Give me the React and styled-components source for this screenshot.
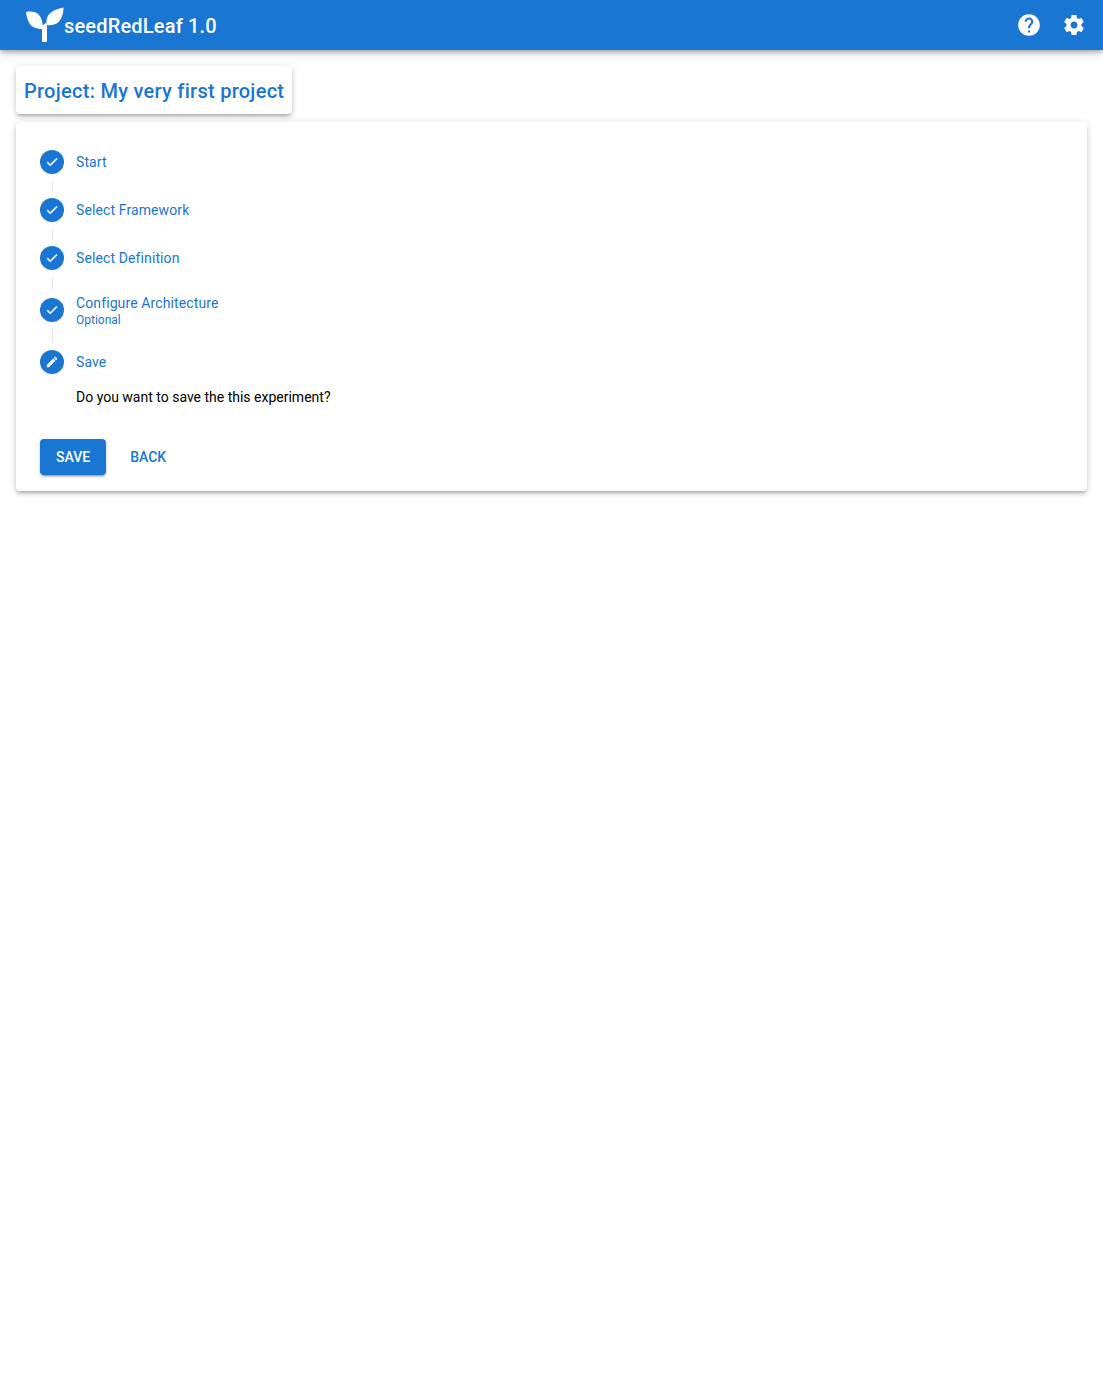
import styled, { createGlobalStyle } from "styled-components"

const GlobalStyle = createGlobalStyle`
  html, body {
    margin: 0;
    padding: 0;
    background: #fff;
    font-family: Roboto, "Helvetica Neue", Arial, sans-serif;
    font-size: 14px;
  }
`

const BLUE = "#1976d2"
const RAISED = "0 3px 3px -2px rgba(0,0,0,.2), 0 3px 4px 0 rgba(0,0,0,.14), 0 1px 8px 0 rgba(0,0,0,.12)"

const Page = styled.div`
  min-height: 1389px;
`
const Bar = styled.header`
  height: 50px;
  background: ${BLUE};
  color: #fff;
  display: flex;
  align-items: center;
  padding: 0 16px 0 24px;
  box-shadow: 0 2px 4px -1px rgba(0,0,0,.2), 0 4px 5px 0 rgba(0,0,0,.14), 0 1px 10px 0 rgba(0,0,0,.12);
`
const Logo = styled.svg`
  width: 40px;
  height: 36px;
  flex: none;
  margin-top: -2px;
`
const Brand = styled.div`
  font-size: 20px;
  font-weight: 500;
  letter-spacing: .18px;
  line-height: 32px;
  margin-top: 1px;
`
const Spacer = styled.div`
  flex: 1;
`
const IconButton = styled.button`
  width: 26px;
  height: 26px;
  padding: 0;
  margin-left: ${props => props.$gap || 0}px;
  border: 0;
  background: none;
  color: #fff;
  display: flex;
  align-items: center;
  justify-content: center;
`
const Glyph = styled.svg`
  width: ${props => props.$size || 24}px;
  height: ${props => props.$size || 24}px;
  fill: currentColor;
  stroke: currentColor;
  stroke-width: ${props => props.$stroke || 0};
  display: block;
`
const Main = styled.main`
  padding: 16px;
`
const TitleCard = styled.div`
  display: inline-block;
  vertical-align: top;
  padding: 9px 8px 7px;
  background: #fff;
  border-radius: 4px;
  box-shadow: ${RAISED};
`
const Title = styled.h1`
  margin: 0;
  font-size: 20px;
  font-weight: 500;
  line-height: 32px;
  letter-spacing: .27px;
  color: ${BLUE};
`
const Card = styled.section`
  margin-top: 8px;
  padding: 20px 24px 16px;
  background: #fff;
  border-radius: 4px;
  box-shadow: ${RAISED};
`
const Step = styled.div`
  height: 40px;
  display: flex;
  align-items: center;
`
const StepIcon = styled.span`
  width: 24px;
  height: 24px;
  flex: none;
  margin-right: 12px;
  border-radius: 50%;
  background: ${BLUE};
  color: #fff;
  display: flex;
  align-items: center;
  justify-content: center;
`
const LabelWrap = styled.div`
  display: flex;
  flex-direction: column;
  color: ${BLUE};
`
const Label = styled.span`
  font-size: 14px;
  line-height: 20px;
  letter-spacing: .11px;
`
const Hint = styled.span`
  font-size: 12px;
  line-height: 14px;
`
const Connector = styled.div`
  height: ${props => props.$height}px;
  width: 1px;
  margin-left: 12px;
  background: #e0e0e0;
`
const StepBody = styled.div`
  padding-left: 36px;
  margin-top: 5px;
`
const Question = styled.p`
  margin: 0;
  font-size: 14px;
  line-height: 20px;
  color: #000;
`
const Actions = styled.div`
  display: flex;
  align-items: center;
  margin: 32px 0 0 -36px;
`
const Button = styled.button`
  height: 36px;
  padding: 0 16px;
  border: 0;
  border-radius: 4px;
  font-family: inherit;
  font-size: 14px;
  font-weight: 500;
  text-transform: uppercase;
  color: ${props => (props.$primary ? "#fff" : BLUE)};
  background: ${props => (props.$primary ? BLUE : "transparent")};
  margin-left: ${props => (props.$primary ? 0 : 8)}px;
  box-shadow: ${props => (props.$primary ? "0 3px 1px -2px rgba(0,0,0,.2), 0 2px 2px 0 rgba(0,0,0,.14), 0 1px 5px 0 rgba(0,0,0,.12)" : "none")};
`

const CHECK = "M9 16.17L4.83 12l-1.42 1.41L9 19 21 7l-1.41-1.41z"
const EDIT = "M3 17.25V21h3.75L17.81 9.94l-3.75-3.75L3 17.25zM20.71 7.04c.39-.39.39-1.02 0-1.41l-2.34-2.34a.9959.9959 0 0 0-1.41 0l-1.83 1.83 3.75 3.75 1.83-1.83z"
const HELP = "M12 2C6.48 2 2 6.48 2 12s4.48 10 10 10 10-4.48 10-10S17.52 2 12 2zm1 17h-2v-2h2v2zm2.07-7.75l-.9.92C13.45 12.9 13 13.5 13 15h-2v-.5c0-1.1.45-2.1 1.17-2.83l1.24-1.26c.37-.36.59-.86.59-1.41 0-1.1-.9-2-2-2s-2 .9-2 2H8c0-2.21 1.79-4 4-4s4 1.79 4 4c0 .88-.36 1.68-.93 2.25z"
const SETTINGS = "M19.43 12.98c.04-.32.07-.64.07-.98 0-.34-.03-.66-.07-.98l2.11-1.65c.19-.15.24-.42.12-.64l-2-3.46c-.09-.16-.26-.25-.44-.25-.06 0-.12.01-.17.03l-2.49 1c-.52-.4-1.08-.73-1.69-.98l-.38-2.65C14.46 2.18 14.25 2 14 2h-4c-.25 0-.46.18-.49.42l-.38 2.65c-.61.25-1.17.59-1.69.98l-2.49-1c-.06-.02-.12-.03-.18-.03-.17 0-.34.09-.43.25l-2 3.46c-.13.22-.07.49.12.64l2.11 1.65c-.04.32-.07.65-.07.98 0 .33.03.66.07.98l-2.11 1.65c-.19.15-.24.42-.12.64l2 3.46c.09.16.26.25.44.25.06 0 .12-.01.17-.03l2.49-1c.52.4 1.08.73 1.69.98l.38 2.65c.03.24.24.42.49.42h4c.25 0 .46-.18.49-.42l.38-2.65c.61-.25 1.17-.59 1.69-.98l2.49 1c.06.02.12.03.18.03.17 0 .34-.09.43-.25l2-3.46c.12-.22.07-.49-.12-.64l-2.11-1.65zM12 15.5c-1.93 0-3.5-1.57-3.5-3.5s1.57-3.5 3.5-3.5 3.5 1.57 3.5 3.5-1.57 3.5-3.5 3.5z"

const steps = [
  { label: "Start", after: 8 },
  { label: "Select Framework", after: 8 },
  { label: "Select Definition", after: 12 },
  { label: "Configure Architecture", hint: "Optional", after: 12 },
  { label: "Save", icon: EDIT },
]

const App = () => {
  return (
    <Page>
      <GlobalStyle />
      <Bar>
        <Logo viewBox="0 0 40 36">
          <path fill="#fff" d="M2 6C7 5 12 5.500 15 9C18 12.500 18.800 17 19 23C13 23 8 21.500 5.500 17.500C3.500 14.500 2.500 10 2 6z" />
          <path fill="#fff" d="M39.500 1.500C39.500 7 38 13 34 16.500C31 19 26.500 19.500 22.500 19C22 14 23 9.500 27 6.500C30 4 35 2.500 39.500 1.500z" />
          <path fill="#fff" d="M17.500 20L22 17C22.800 18.500 23 20 23 22V34.500c0 1-.7 1.500-1.500 1.500h-2c-.8 0-1.500-.5-1.500-1.500V23C18 22 17.800 21 17.500 20z" />
        </Logo>
        <Brand>seedRedLeaf 1.0</Brand>
        <Spacer />
        <IconButton aria-label="help">
          <Glyph viewBox="0 0 24 24" $size={28}><path d={HELP} /></Glyph>
        </IconButton>
        <IconButton aria-label="settings" $gap={19}>
          <Glyph viewBox="0 0 24 24" $size={24}><path d={SETTINGS} /></Glyph>
        </IconButton>
      </Bar>
      <Main>
        <TitleCard>
          <Title>Project: My very first project</Title>
        </TitleCard>
        <Card>
          {steps.map(step => (
            <div key={step.label}>
              <Step>
                <StepIcon>
                  <Glyph viewBox="0 0 24 24" $size={14} $stroke={step.icon ? 0 : 1}><path d={step.icon || CHECK} /></Glyph>
                </StepIcon>
                <LabelWrap>
                  <Label>{step.label}</Label>
                  {step.hint && <Hint>{step.hint}</Hint>}
                </LabelWrap>
              </Step>
              {step.after && <Connector $height={step.after} />}
            </div>
          ))}
          <StepBody>
            <Question>Do you want to save the this experiment?</Question>
            <Actions>
              <Button $primary>Save</Button>
              <Button>Back</Button>
            </Actions>
          </StepBody>
        </Card>
      </Main>
    </Page>
  )
}

export default App
